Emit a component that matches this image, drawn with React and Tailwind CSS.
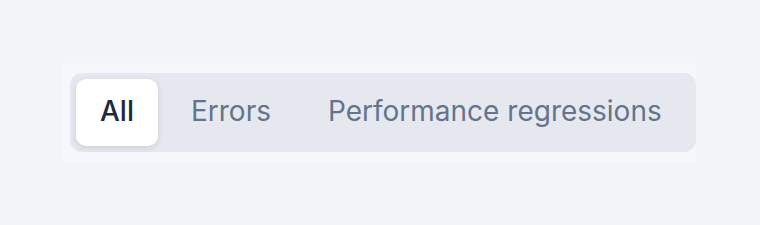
import React, { useState } from "react";

const tabs = ["All", "Errors", "Performance regressions"];

export default function App() {
  const [active, setActive] = useState(0);

  return (
    <div
      className="min-h-[225px] w-full bg-[#f1f5f9] pl-[63px] pt-[63px]"
      style={{ fontFamily: "Inter, 'Noto Sans', sans-serif" }}
    >
      <div className="inline-block bg-[#f5f8fb] pl-[7px] pt-[10px] pb-[10px]">
        {/* Tab list */}
        <div className="flex gap-[9px] rounded-xl bg-[#e5e9ef] p-[6px] pr-[10px]">
          {tabs.map((t, i) => (
            <button
              key={t}
              onClick={() => setActive(i)}
              className={
                i === active
                  ? "h-[67px] rounded-[10px] bg-white px-6 pb-1 text-[28px] font-medium text-[#1e293b] shadow-[0_2px_6px_rgba(15,23,42,0.12)]"
                  : "h-[67px] rounded-[10px] px-6 pb-1 text-[28px] text-[#64748b]"
              }
            >
              {t}
            </button>
          ))}
        </div>
      </div>
    </div>
  );
}
